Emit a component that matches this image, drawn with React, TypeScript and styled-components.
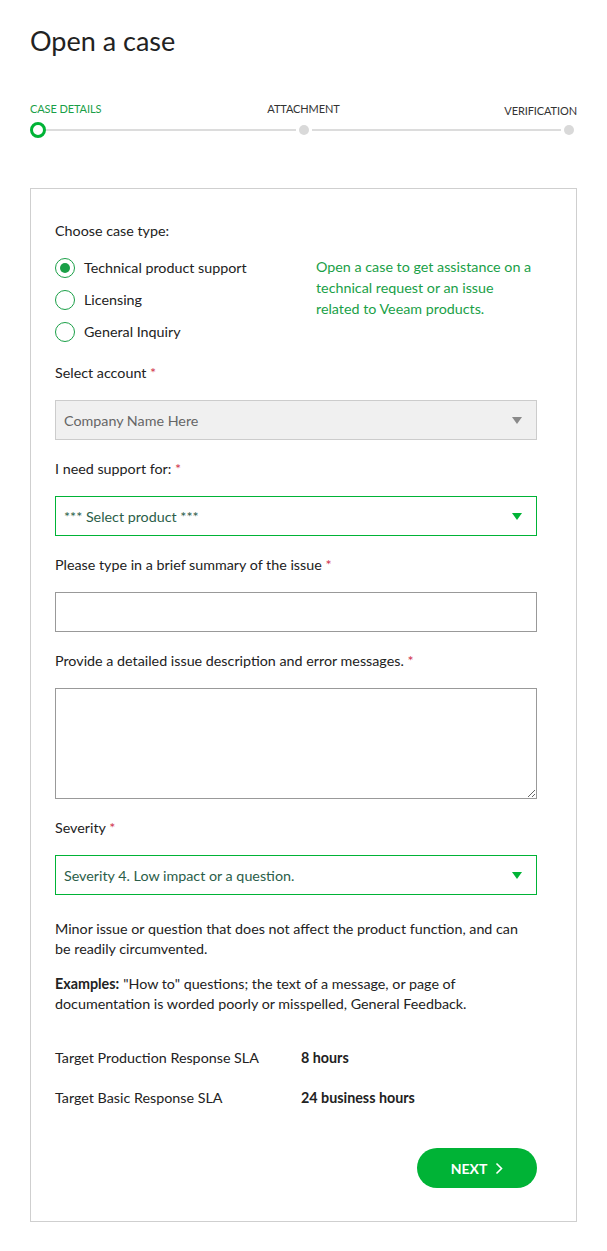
import React from 'react';
import styled, { createGlobalStyle } from 'styled-components';

const green = '#00b336';
const textGreen = '#1a9f47';

const GlobalStyle = createGlobalStyle`
  html, body {
    margin: 0;
    padding: 0;
    background: #fff;
  }
  body {
    font-family: Lato, "Open Sans", sans-serif;
    color: #222;
    font-size: 14.3px;
  }
  * { box-sizing: border-box; }
`;

const Page = styled.div`
  width: 607px;
  padding: 24px 30px 30px 30px;
`;

const Title = styled.h1`
  font-size: 27px;
  font-weight: 400;
  margin: 0 0 44px 0;
  color: #222;
  line-height: 34px;
`;

const Stepper = styled.div`
  margin-bottom: 50px;
`;

const StepLabels = styled.div`
  display: grid;
  grid-template-columns: 1fr 1fr 1fr;
  font-size: 11px;
  letter-spacing: -0.1px;
  height: 20px;
`;

const StepLabel = styled.div<{ $align: 'left' | 'center' | 'right'; $active?: boolean; $drop?: number }>`
  text-align: ${({ $align }) => $align};
  color: ${({ $active }) => ($active ? textGreen : '#333')};
  padding-top: ${({ $drop }) => $drop || 0}px;
  line-height: 14px;
`;

const Track = styled.div`
  display: flex;
  align-items: center;
  height: 16px;
`;

const ActiveDot = styled.span`
  width: 16px;
  height: 16px;
  border-radius: 50%;
  border: 3px solid ${green};
  flex: none;
`;

const Dot = styled.span`
  width: 10px;
  height: 10px;
  border-radius: 50%;
  background: #d9d9d9;
  flex: none;
  margin: 0 3px;
`;

const Line = styled.span`
  flex: 1;
  height: 2px;
  background: #dcdcdc;
`;

const Card = styled.div`
  border: 1px solid #cfcfcf;
  padding: 32px 39px 33px 24px;
`;

const Label = styled.div`
  line-height: 20px;
  margin-bottom: 17px;
  color: #222;
`;

const Req = styled.span`
  color: #d0324b;
`;

const TypeRow = styled.div`
  display: flex;
  justify-content: space-between;
  margin-bottom: 21px;
`;

const RadioList = styled.div`
  display: flex;
  flex-direction: column;
  gap: 12px;
`;

const RadioItem = styled.label`
  display: flex;
  align-items: center;
  gap: 9px;
  line-height: 20px;
`;

const RadioCircle = styled.span<{ $checked?: boolean }>`
  width: 20px;
  height: 20px;
  border-radius: 50%;
  border: 1.5px solid ${textGreen};
  display: flex;
  align-items: center;
  justify-content: center;
  flex: none;

  &::after {
    content: '';
    width: 10px;
    height: 10px;
    border-radius: 50%;
    background: ${({ $checked }) => ($checked ? textGreen : 'transparent')};
  }
`;

const Hint = styled.p`
  width: 221px;
  padding-right: 2px;
  margin: -2px 0 0 0;
  color: ${textGreen};
  line-height: 21px;
`;

const Field = styled.div`
  margin-bottom: 19px;
`;

const SelectBox = styled.div<{ $disabled?: boolean }>`
  height: 40px;
  display: flex;
  align-items: center;
  justify-content: space-between;
  padding: 0 14px 0 8px;
  background: ${({ $disabled }) => ($disabled ? '#f0f0f0' : '#fff')};
  border: 1px solid ${({ $disabled }) => ($disabled ? '#cccccc' : green)};
  color: ${({ $disabled }) => ($disabled ? '#666' : '#2b5e49')};
`;

const Arrow = styled.span<{ $disabled?: boolean }>`
  width: 0;
  height: 0;
  border-left: 5px solid transparent;
  border-right: 5px solid transparent;
  border-top: 7px solid ${({ $disabled }) => ($disabled ? '#8a8a8a' : green)};
`;

const TextInput = styled.input`
  display: block;
  width: 100%;
  height: 40px;
  border: 1px solid #999;
  border-radius: 0;
  font: inherit;
  padding: 0 8px;
  outline: none;
`;

const TextArea = styled.textarea`
  display: block;
  width: 100%;
  height: 111px;
  border: 1px solid #999;
  border-radius: 0;
  font: inherit;
  padding: 8px;
  outline: none;
`;

const Description = styled.div`
  margin-top: 24px;
  width: 470px;
  display: flex;
  flex-direction: column;
  gap: 15px;
`;

const Para = styled.p`
  margin: 0;
  line-height: 20px;
  color: #222;
`;

const Strong = styled.strong`
  font-weight: 700;
  margin-right: 4px;
`;

const SlaTable = styled.div`
  display: grid;
  grid-template-columns: 246px 1fr;
  row-gap: 20px;
  margin-top: 34px;
  line-height: 20px;
`;

const SlaValue = styled.div`
  font-weight: 700;
`;

const Actions = styled.div`
  display: flex;
  justify-content: flex-end;
  margin-top: 40px;
`;

const NextButton = styled.button`
  width: 120px;
  height: 40px;
  border: none;
  border-radius: 20px;
  background: ${green};
  color: #fff;
  font: inherit;
  font-weight: 700;
  font-size: 14px;
  display: flex;
  align-items: center;
  justify-content: center;
  gap: 8px;
  cursor: pointer;
`;

const App: React.FC = () => {
  return (
    <Page>
      <GlobalStyle />
      <Title>Open a case</Title>

      <Stepper>
        <StepLabels>
          <StepLabel $align="left" $active>CASE DETAILS</StepLabel>
          <StepLabel $align="center">ATTACHMENT</StepLabel>
          <StepLabel $align="right" $drop={2}>VERIFICATION</StepLabel>
        </StepLabels>
        <Track>
          <ActiveDot />
          <Line />
          <Dot />
          <Line />
          <Dot />
        </Track>
      </Stepper>

      <Card>
        <Label>Choose case type:</Label>
        <TypeRow>
          <RadioList>
            <RadioItem>
              <RadioCircle $checked />
              Technical product support
            </RadioItem>
            <RadioItem>
              <RadioCircle />
              Licensing
            </RadioItem>
            <RadioItem>
              <RadioCircle />
              General Inquiry
            </RadioItem>
          </RadioList>
          <Hint>Open a case to get assistance on a technical request or an issue related to Veeam products.</Hint>
        </TypeRow>

        <Field>
          <Label>Select account <Req>*</Req></Label>
          <SelectBox $disabled>
            Company Name Here
            <Arrow $disabled />
          </SelectBox>
        </Field>

        <Field>
          <Label>I need support for: <Req>*</Req></Label>
          <SelectBox>
            *** Select product ***
            <Arrow />
          </SelectBox>
        </Field>

        <Field>
          <Label>Please type in a brief summary of the issue <Req>*</Req></Label>
          <TextInput type="text" />
        </Field>

        <Field>
          <Label>Provide a detailed issue description and error messages. <Req>*</Req></Label>
          <TextArea />
        </Field>

        <Field>
          <Label>Severity <Req>*</Req></Label>
          <SelectBox>
            Severity 4. Low impact or a question.
            <Arrow />
          </SelectBox>
        </Field>

        <Description>
          <Para>Minor issue or question that does not affect the product function, and can be readily circumvented.</Para>
          <Para>
            <Strong>Examples:</Strong>"How to" questions; the text of a message, or page of documentation is worded poorly or misspelled, General Feedback.
          </Para>
        </Description>

        <SlaTable>
          <div>Target Production Response SLA</div>
          <SlaValue>8 hours</SlaValue>
          <div>Target Basic Response SLA</div>
          <SlaValue>24 business hours</SlaValue>
        </SlaTable>

        <Actions>
          <NextButton>
            NEXT
            <svg width="8" height="13" viewBox="0 0 8 13" fill="none">
              <path d="M1.5 1.5 L6.5 6.5 L1.5 11.5" stroke="#fff" strokeWidth="1.6" />
            </svg>
          </NextButton>
        </Actions>
      </Card>
    </Page>
  );
};

export default App;
